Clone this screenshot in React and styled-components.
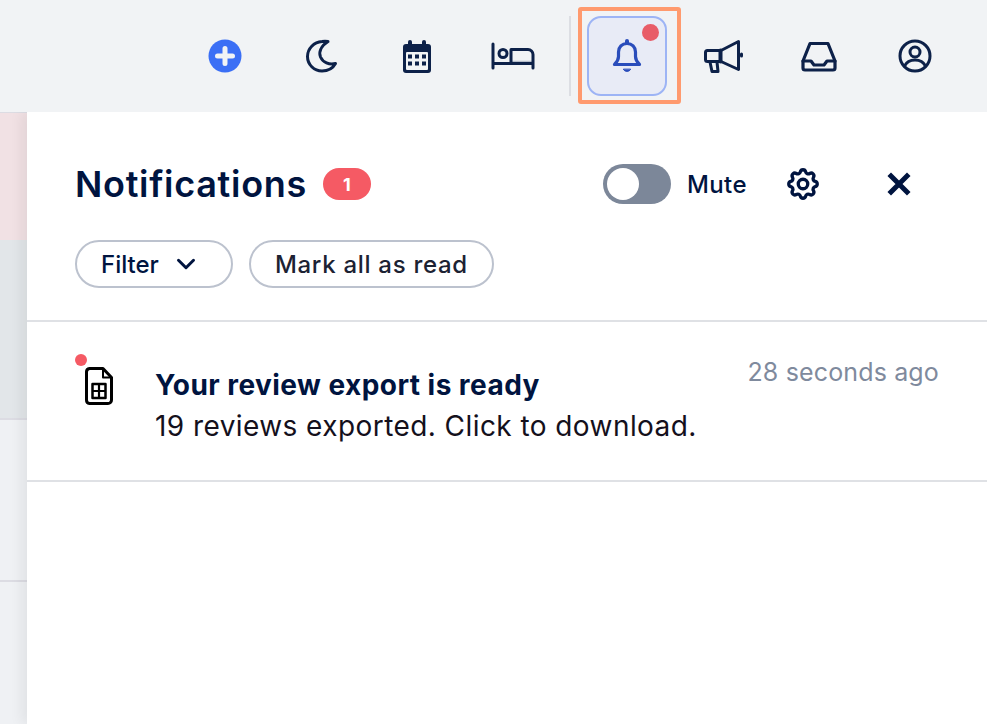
import styled, { createGlobalStyle } from "styled-components"
import { LuChevronDown } from "react-icons/lu"
import { HiOutlineCog } from "react-icons/hi"

const GlobalStyle = createGlobalStyle`
    html, body {
        margin: 0;
        padding: 0;
        height: 100%;
        background: #fff;
        overflow: hidden;
        font-family: "Inter", "Liberation Sans", sans-serif;
    }
    #root {
        height: 100%;
    }
`

const Page = styled.div`
    position: relative;
    display: flex;
    flex-direction: column;
    width: 987px;
    height: 724px;
    overflow: hidden;
`

const TopBar = styled.header`
    position: relative;
    z-index: 1;
    display: flex;
    justify-content: flex-end;
    align-items: center;
    height: 112px;
    flex-shrink: 0;
    padding-right: 24px;
    box-sizing: border-box;
    background-color: #f1f3f5;
`

const IconCell = styled.div`
    display: flex;
    justify-content: center;
    align-items: center;
    width: 96px;
    height: 80px;
    color: #0d2149;
`

const Separator = styled.div`
    width: 2px;
    height: 80px;
    margin: 0 8px;
    background-color: #dcdee3;
`

const BellButton = styled.div`
    position: relative;
    display: flex;
    justify-content: center;
    align-items: center;
    width: 80px;
    height: 80px;
    margin: 0 8px 0 8px;
    box-sizing: border-box;
    border: 2px solid #9db4f5;
    border-radius: 14px;
    background-color: #e8ebf6;
    color: #2a4dbb;
`

const BellDot = styled.span`
    position: absolute;
    top: 6px;
    right: 6px;
    width: 17px;
    height: 17px;
    border-radius: 50%;
    background-color: #e85c68;
`

const Highlight = styled.div`
    position: absolute;
    z-index: 2;
    left: 578px;
    top: 7px;
    width: 103px;
    height: 97px;
    box-sizing: border-box;
    border: 4px solid #ff9a6e;
    border-radius: 3px;
    pointer-events: none;
`

const Body = styled.div`
    display: flex;
    flex: 1;
    min-height: 0;
`

const BackgroundList = styled.div`
    display: flex;
    flex-direction: column;
    width: 27px;
    flex-shrink: 0;
    border-top: 1px solid #dcdce3;
    background-color: #eff1f4;
`

const BackgroundRow = styled.div`
    height: ${(p) => p.$height}px;
    flex-shrink: 0;
    box-sizing: border-box;
    background-color: ${(p) => p.$color};
    border-bottom: ${(p) => (p.$line ? "2px solid #dcdce3" : "none")};
`

const Panel = styled.section`
    flex: 1;
    display: flex;
    flex-direction: column;
    background-color: #fff;
    box-shadow: -6px 0 12px rgba(0, 0, 0, 0.06);
`

const PanelHeader = styled.div`
    display: flex;
    flex-direction: column;
    gap: 36px;
    height: 210px;
    flex-shrink: 0;
    box-sizing: border-box;
    padding: 52px 0 0 48px;
    border-bottom: 2px solid #dfe1e5;
`

const TitleRow = styled.div`
    display: flex;
    align-items: center;
    height: 40px;
`

const Title = styled.h1`
    margin: 0;
    font-size: 36px;
    font-weight: 600;
    letter-spacing: 0.7px;
    color: #00143f;
`

const CountBadge = styled.span`
    display: flex;
    justify-content: center;
    align-items: center;
    width: 48px;
    height: 32px;
    margin-left: 16px;
    border-radius: 16px;
    background-color: #f55a64;
    color: #fff;
    font-size: 18px;
    font-weight: 700;
`

const Toggle = styled.div`
    display: flex;
    align-items: center;
    width: 68px;
    height: 40px;
    margin-left: 232px;
    padding-left: 4px;
    box-sizing: border-box;
    border-radius: 20px;
    background-color: #7c8799;
`

const ToggleKnob = styled.span`
    width: 32px;
    height: 32px;
    border-radius: 50%;
    background-color: #fff;
`

const MuteLabel = styled.span`
    margin-left: 16px;
    font-size: 24px;
    font-weight: 500;
    letter-spacing: 0.4px;
    color: #00143f;
`

const GearButton = styled.div`
    display: flex;
    margin-left: 37px;
    color: #00143f;

    path {
        stroke-width: 2.1;
    }
`

const CloseButton = styled.div`
    display: flex;
    margin-left: 65px;
    color: #00143f;
`

const ActionRow = styled.div`
    display: flex;
    gap: 16px;
`

const PillButton = styled.button`
    display: flex;
    align-items: center;
    gap: ${(p) => p.$gap || 0}px;
    height: 48px;
    padding: 0 ${(p) => p.$right || 24}px 0 24px;
    box-sizing: border-box;
    border: 2px solid #bcc2ce;
    border-radius: 24px;
    background: #fff;
    font-family: inherit;
    font-size: 24px;
    font-weight: 500;
    letter-spacing: ${(p) => p.$spacing || 0}px;
    color: ${(p) => p.$color};
`

const NotificationRow = styled.article`
    position: relative;
    display: flex;
    height: 160px;
    flex-shrink: 0;
    box-sizing: border-box;
    padding: 44px 48px 0 56px;
    border-bottom: 2px solid #dfe1e5;
`

const UnreadDot = styled.span`
    position: absolute;
    left: 48px;
    top: 32px;
    width: 12px;
    height: 12px;
    border-radius: 50%;
    background-color: #f55a64;
`

const FileIcon = styled.div`
    display: flex;
    width: 72px;
    flex-shrink: 0;
    padding-top: 1px;
`

const NotificationText = styled.div`
    flex: 1;
`

const NotificationTitle = styled.div`
    margin-top: -1px;
    font-size: 28px;
    font-weight: 700;
    line-height: 41px;
    letter-spacing: 0.45px;
    color: #00143f;
`

const NotificationBody = styled.div`
    margin-top: -1px;
    font-size: 28px;
    line-height: 42px;
    letter-spacing: 0.43px;
    color: #14101c;
`

const TimeAgo = styled.div`
    margin-top: -12px;
    font-size: 25px;
    line-height: 36px;
    letter-spacing: 0.15px;
    color: #7f8a9d;
`

const PlusIcon = () => (
    <svg width="34" height="34" viewBox="0 0 34 34">
        <circle cx="17" cy="17" r="16.5" fill="#3b6ff5" />
        <path d="M17 9.5v15M9.5 17h15" stroke="#f1f3f5" strokeWidth="5" strokeLinecap="round" />
    </svg>
)

const MoonIcon = () => (
    <svg width="34" height="34" viewBox="0 0 34 34" fill="none" stroke="currentColor" strokeWidth="3" strokeLinejoin="round" strokeLinecap="round">
        <path d="M24 2.500C17 7 14.500 13 16.500 18C19 23.500 25 26 31.500 24.500C29 29 24 32 18 32C10 32 3.500 25.500 3.500 17.500C3.500 9.500 10 3 18 2.500C20 2.300 22 2.300 24 2.500Z" />
    </svg>
)

const CalendarIcon = () => (
    <svg width="30" height="35" viewBox="0 0 30 35">
        <rect x="1" y="5" width="28" height="29" rx="3" fill="#0d2149" />
        <rect x="6" y="1" width="4" height="8" rx="2" fill="#0d2149" />
        <rect x="20" y="1" width="4" height="8" rx="2" fill="#0d2149" />
        <rect x="4" y="13" width="22" height="18" rx="1" fill="#f1f3f5" />
        {[6, 13, 20].map((x) =>
            [15.5, 22.5].map((y) => <rect key={`${x}-${y}`} x={x} y={y} width="4" height="4" fill="#0d2149" />)
        )}
    </svg>
)

const BedIcon = () => (
    <svg width="44" height="28" viewBox="0 0 44 28" fill="none" stroke="currentColor" strokeWidth="3" strokeLinecap="round" strokeLinejoin="round">
        <path d="M20 19.500h22" stroke="#b5bcc9" strokeWidth="1.500" />
        <path d="M2 2v24M2 21.500h40M42 26V12.500a5 5 0 0 0-5-5H20v14" />
        <circle cx="12" cy="11.500" r="4" />
    </svg>
)

const BellIcon = () => (
    <svg width="30" height="34" viewBox="0 0 30 34" fill="none" stroke="currentColor" strokeWidth="3.200" strokeLinecap="round" strokeLinejoin="round">
        <path d="M2.500 25.500h25c-2.500-2.500-4-5-4-8v-4.500c0-5-3.500-8.500-8.500-8.500s-8.500 3.500-8.500 8.500v4.500c0 3-1.500 5.500-4 8z" />
        <path d="M15 2v2" strokeWidth="4" />
        <path d="M11.500 30.500c1 2.600 6 2.600 7 0z" fill="currentColor" strokeWidth="1" />
    </svg>
)

const MegaphoneIcon = () => (
    <svg width="40" height="34" viewBox="0 0 40 34" fill="none" stroke="currentColor" strokeWidth="3" strokeLinecap="round" strokeLinejoin="round">
        <path d="M35.500 2.500L18 11.500H4.500a2 2 0 0 0-2 2v7a2 2 0 0 0 2 2H18l17.500 8z" />
        <path d="M17.500 11.500v11" strokeWidth="4" />
        <path d="M7 23l2 9.500h6L14 23" />
        <path d="M38.500 15v2" />
    </svg>
)

const InboxIcon = () => (
    <svg width="36" height="32" viewBox="0 0 36 32" fill="none" stroke="currentColor" strokeWidth="3.200" strokeLinecap="round" strokeLinejoin="round">
        <path d="M9 3.500h18l7 17.500v7a2 2 0 0 1-2 2H4a2 2 0 0 1-2-2v-7z" />
        <path d="M2 21h8l3 4h10l3-4h8" />
    </svg>
)

const UserIcon = () => (
    <svg width="34" height="34" viewBox="0 0 34 34" fill="none" stroke="currentColor" strokeWidth="3">
        <circle cx="17" cy="17" r="15" />
        <circle cx="17" cy="13" r="5" />
        <path d="M6.500 27c2-4 6-6 10.500-6s8.500 2 10.500 6" />
    </svg>
)

const CloseIcon = () => (
    <svg width="24" height="24" viewBox="0 0 24 24" fill="none" stroke="currentColor" strokeWidth="5" strokeLinecap="square">
        <path d="M4 4l16 16M20 4L4 20" />
    </svg>
)

const SheetIcon = () => (
    <svg width="32" height="40" viewBox="0 0 32 40" fill="none" stroke="#000" strokeWidth="3" strokeLinejoin="round">
        <path d="M6.500 1.500H20L28.500 10.500V33a3.500 3.500 0 0 1-3.500 3.500H6.500A3.500 3.500 0 0 1 3.500 33V5A3.500 3.500 0 0 1 6.500 1.500z" />
        <path d="M20 1.500v9h8.500" strokeWidth="2" />
        <rect x="9.500" y="17" width="13" height="14" strokeWidth="2.500" />
        <path d="M16 17v14M9.500 24h13" strokeWidth="2.200" />
    </svg>
)

const App = () => {
    return (
        <Page>
            <GlobalStyle />
            <TopBar>
                <IconCell><PlusIcon /></IconCell>
                <IconCell><MoonIcon /></IconCell>
                <IconCell><CalendarIcon /></IconCell>
                <IconCell><BedIcon /></IconCell>
                <Separator />
                <BellButton>
                    <BellIcon />
                    <BellDot />
                </BellButton>
                <IconCell><MegaphoneIcon /></IconCell>
                <IconCell><InboxIcon /></IconCell>
                <IconCell><UserIcon /></IconCell>
            </TopBar>
            <Body>
                <BackgroundList>
                    <BackgroundRow $height={127} $color="#f1e1e4" />
                    <BackgroundRow $height={180} $color="#e2e6e9" $line />
                    <BackgroundRow $height={162} $color="#eff1f4" $line />
                </BackgroundList>
                <Panel>
                    <PanelHeader>
                        <TitleRow>
                            <Title>Notifications</Title>
                            <CountBadge>1</CountBadge>
                            <Toggle><ToggleKnob /></Toggle>
                            <MuteLabel>Mute</MuteLabel>
                            <GearButton><HiOutlineCog size={38} /></GearButton>
                            <CloseButton><CloseIcon /></CloseButton>
                        </TitleRow>
                        <ActionRow>
                            <PillButton $color="#00143f" $gap={12} $right={30}>
                                Filter
                                <LuChevronDown size={30} strokeWidth={2.4} />
                            </PillButton>
                            <PillButton $color="#1c2233" $spacing={0.7}>Mark all as read</PillButton>
                        </ActionRow>
                    </PanelHeader>
                    <NotificationRow>
                        <UnreadDot />
                        <FileIcon><SheetIcon /></FileIcon>
                        <NotificationText>
                            <NotificationTitle>Your review export is ready</NotificationTitle>
                            <NotificationBody>19 reviews exported. Click to download.</NotificationBody>
                        </NotificationText>
                        <TimeAgo>28 seconds ago</TimeAgo>
                    </NotificationRow>
                </Panel>
            </Body>
            <Highlight />
        </Page>
    )
}

export default App
